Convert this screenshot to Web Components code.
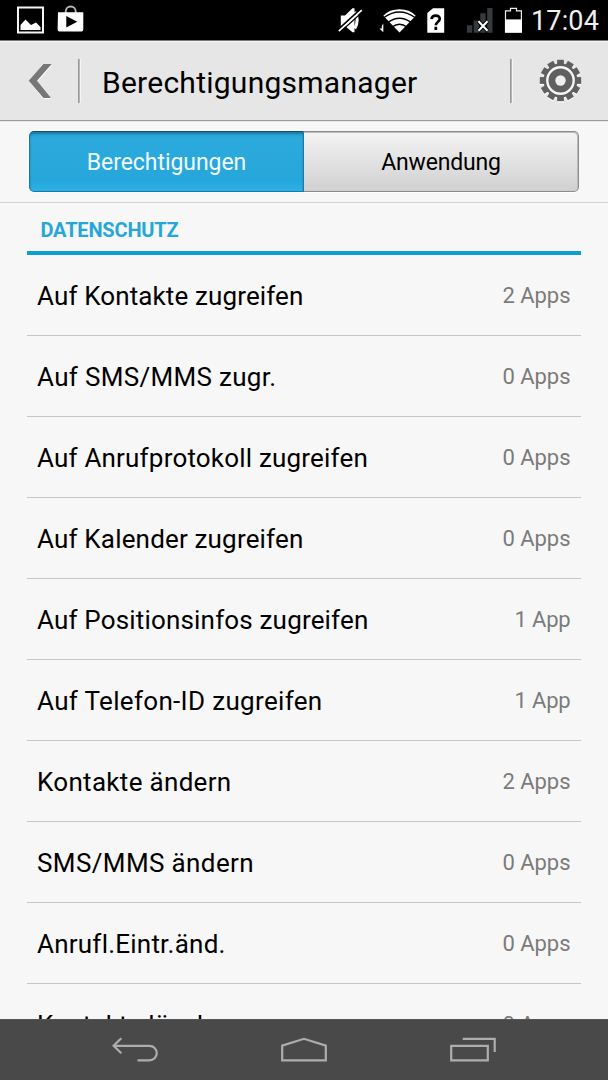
<!DOCTYPE html>
<html lang="de">
<head>
<meta charset="utf-8">
<title>Berechtigungsmanager</title>
<style>
html,body{margin:0;height:100%;background:#f7f7f7;overflow:hidden}
body{font-family:Roboto,"Noto Sans",sans-serif;color:#000}
</style>
</head>
<body>
<permission-screen></permission-screen>
<script>
const define = (name, html, setup) => customElements.define(name, class extends HTMLElement {
  connectedCallback() {
    if (this.shadowRoot) return;
    const t = document.createElement('template');
    t.innerHTML = html;
    this.attachShadow({mode: 'open'}).append(t.content.cloneNode(true));
    if (setup) setup(this, this.shadowRoot);
  }
});

/* Text whose tracking is adjusted so that it takes the given width. */
define('fit-text', `<style>:host{display:inline-block;white-space:pre}span{display:inline-block}</style><span></span>`, (el, root) => {
  const s = root.querySelector('span');
  s.textContent = el.getAttribute('text');
  const want = +el.getAttribute('w');
  if (want) {
    const d = (want - s.getBoundingClientRect().width) / s.textContent.length;
    s.style.letterSpacing = d + 'px';
  }
});

define('status-bar', `<style>
:host{display:block;background:#000;border-bottom:1px solid #77777a;box-sizing:border-box;height:41px}
svg{display:block;flex:none}
.bar{display:flex;height:40px}
.clock{margin-left:9px;font-size:27px;line-height:43px;color:#f0f0f0}
</style><div class="bar">
<svg width="522" height="40" viewBox="0 0 522 40">
<rect x="18" y="7.5" width="25" height="25" fill="none" stroke="#f4f4f4" stroke-width="2"/>
<path d="M20.5 30V25L25.5 19.5 31 25 33 24 36 22.5 40.5 27V30Z" fill="#fff"/>
<path d="M65.7 13V11.5a5 5 0 0 1 10 0V13" fill="none" stroke="#bbb" stroke-width="1.8"/>
<path fill-rule="evenodd" fill="#fff" d="M58 12.2H83.3V29.5Q83.3 31.4 81.3 31.4H59.5Q57.6 31.4 57.6 29.5ZM66.3 16V27.5L77.2 21.7Z"/>
<path d="M340.8 15.5H345L352.5 8.3H354.5V32.2H352.5L345 26H340.8Z" fill="#fff"/>
<path d="M354.8 12Q359.5 20 354.8 28.5" fill="none" stroke="#fff" stroke-width="3"/>
<path d="M337.8 30 360.8 9" stroke="#000" stroke-width="1.8"/>
<path d="M339.8 32.4 362.8 11.4" stroke="#000" stroke-width="1.3"/>
<path d="M338.8 31.2 361.8 10.2" stroke="#fff" stroke-width="1.6"/>
<path d="M383.3 23.5V32.2L379.4 28.5H381.8V26Z" fill="#fff"/>
<path d="M399.5 32.5 383.3 15.7Q389.5 9.3 399.5 9.3T415.7 15.7Z" fill="#fff"/>
<path d="M384 17.5Q399.5 6.5 415 17.5M388 22.4Q399.5 14 411 22.4M392 27Q399.5 21.4 407 27" fill="none" stroke="#000" stroke-width="1.5"/>
<path d="M427.3 32.8V13L433 8.3H444.2V32.8Z" fill="#fff"/>
<path d="M431.6 19.2Q431.8 15.7 435.8 15.7T439.7 18.8Q439.7 20.6 437.8 22T435.8 25.2M435.8 26.8V30" fill="none" stroke="#000" stroke-width="2.7"/>
<path d="M467 25.2h5.3v7.6H467ZM473.7 20.5H479v12.3h-5.3ZM480.3 13.2h5.3v19.6h-5.3ZM487.2 8h5.3v24.8h-5.3Z" fill="#353a3d"/>
<path d="M478.5 21.3 487.5 30.7M487.5 21.3 478.5 30.7" stroke="#000" stroke-width="4"/>
<path d="M478.5 21.3 487.5 30.7M487.5 21.3 478.5 30.7" stroke="#fff" stroke-width="2"/>
<path d="M505.5 32V10.8H510.5V8.3H516.5V10.8H521.4V32Z" fill="none" stroke="#eee" stroke-width="1.2"/>
<path d="M505 19.4H522V32.7H505Z" fill="#fff"/>
</svg>
<div class="clock"><fit-text text="17:04" w="68"></fit-text></div>
</div>`);

define('title-bar', `<style>
:host{display:flex;align-items:center;height:81px;box-sizing:border-box;padding-bottom:1px;border-top:1px solid #f8f8f8;border-bottom:1px solid #e9e9e9;background:linear-gradient(#e6e6e6 78px,#999 78px)}
svg{display:block;flex:none}
i{width:2px;height:44px;background:linear-gradient(90deg,#999 50%,#b5b5b5 50%);border-right:1px solid #f5f5f5;flex:none}
h1{font-size:30px;font-weight:400;margin:0 auto 0 21px;line-height:40px;position:relative;top:2px}
</style>
<svg width="78" height="78" viewBox="0 42 78 78"><path d="M43.5 65.2H52L37.5 81.6 51.5 98.9H43.5L29 81.6Z" fill="#fff"/><path d="M43.5 64.1H51.7L37 80.8 51 98.1H43.5L28.7 80.8Z" fill="#777"/></svg>
<i></i><h1><slot></slot></h1><i></i>
<svg width="95" height="78" viewBox="513 42 95 78"><g id="g" transform="translate(560.5 80.5)"></g></svg>`, (el, root) => {
  let teeth = '';
  for (let k = 0; k < 12; k++) teeth += `<path d="M-3.4 -15V-20.7H3.4V-15Z" transform="rotate(${k * 30})"/>`;
  const shape = `${teeth}<circle r="17"/>`;
  root.getElementById('g').innerHTML = `<g fill="#fff" transform="translate(0 1.2)">${shape}</g><g fill="#606060">${shape}</g>
  <circle r="13.2" fill="none" stroke="#f6f6f6" stroke-width="2.4"/><circle r="5.2" fill="#eee"/>`;
});

define('segment-tabs', `<style>
:host{display:flex;height:81px;box-sizing:border-box;padding:9px 29px 10px;border-bottom:1px solid #d2d2d2;background:#f7f7f7;font-size:23px;line-height:62px;text-align:center}
div{flex:1;box-sizing:border-box;height:61px;border:1px solid #929292}
.on{flex:0 0 275px;border-radius:5px 0 0 5px;color:#f2fbff;background:linear-gradient(#2a9fd0,#2caadd 12%,#26a6da 80%,#2cb1e6);border-color:#174e66 #177ba5 #177ba5;box-shadow:inset 0 2px 2px #1c7ba4,0 1px #fff}
.off{border-radius:0 5px 5px 0;border-left:0;background:linear-gradient(#f4f4f4,#d0d0d0);border-color:#8c8c8c;box-shadow:inset -1px 1px #bbb,0 1px #fff}
</style><div class="on"><slot name="a"></slot></div><div class="off"><slot name="b"></slot></div>`);

define('section-head', `<style>
:host{display:block;height:52px;box-sizing:border-box;margin:0 27px;padding-left:13.5px;border-bottom:4px solid #0c9fd2;color:#25a7da;font-size:20px;font-weight:700;line-height:54px}
</style><slot></slot>`);

define('permission-row', `<style>
:host{display:flex;justify-content:space-between;height:81px;box-sizing:border-box;margin:0 27px;padding:0 10.5px 0 10px;border-bottom:1px solid #c6c6c6;line-height:82px;font-size:26px}
.count{font-size:22px;color:#7b7b7b}
</style><span class="name"></span><span class="count"></span>`, (el, root) => {
  const [name, w, count, cw] = el.dataset.row.split('|');
  root.querySelector('.name').innerHTML = `<fit-text text="${name}" w="${w}"></fit-text>`;
  root.querySelector('.count').innerHTML = `<fit-text text="${count}" w="${cw}"></fit-text>`;
});

define('nav-bar', `<style>
:host{display:block;flex:none;height:61px;box-sizing:border-box;background:#49494a;border-top:1px solid #555}
svg{display:block}
</style><svg width="608" height="60" viewBox="0 1020 608 60" fill="none" stroke="#adadad" stroke-width="2.2">
<path d="M121.3 1038.3 113.6 1045.8 121.3 1053.3M114 1045.8H149.5A7.3 7.3 0 0 1 149.5 1060.4H137.5"/>
<path d="M282.2 1060.3V1045.6L304 1038.8 325.8 1045.6V1060.3Z"/>
<path d="M451.2 1045.8H487.8V1060.3H451.2ZM462.7 1038.8H494.7V1052"/>
</svg>`);

define('permission-screen', `<style>
:host{display:flex;flex-direction:column;width:608px;height:1080px;overflow:hidden;background:#f7f7f7}
main{flex:1;min-height:0;overflow:hidden}
status-bar,title-bar,segment-tabs{flex:none}
</style>
<status-bar></status-bar>
<title-bar><fit-text text="Berechtigungsmanager" w="315.5"></fit-text></title-bar>
<segment-tabs><fit-text slot="a" text="Berechtigungen" w="159.5"></fit-text><fit-text slot="b" text="Anwendung" w="119.5"></fit-text></segment-tabs>
<main><section-head><fit-text text="DATENSCHUTZ" w="138"></fit-text></section-head></main>
<nav-bar></nav-bar>`, (el, root) => {
  const rows = ['Auf Kontakte zugreifen|266.5|2 Apps|68', 'Auf SMS/MMS zugr.|239.5|0 Apps|68', 'Auf Anrufprotokoll zugreifen|331|0 Apps|68',
    'Auf Kalender zugreifen|266.5|0 Apps|68', 'Auf Positionsinfos zugreifen|331.5|1 App|56', 'Auf Telefon-ID zugreifen|285.5|1 App|56',
    'Kontakte ändern|194.5|2 Apps|68', 'SMS/MMS ändern|217|0 Apps|68', 'Anrufl.Eintr.änd.|188|0 Apps|68', 'Kontakte löschen|203|0 Apps|68'];
  for (const r of rows) {
    const e = document.createElement('permission-row');
    e.dataset.row = r;
    root.querySelector('main').append(e);
  }
});
</script>
</body>
</html>
